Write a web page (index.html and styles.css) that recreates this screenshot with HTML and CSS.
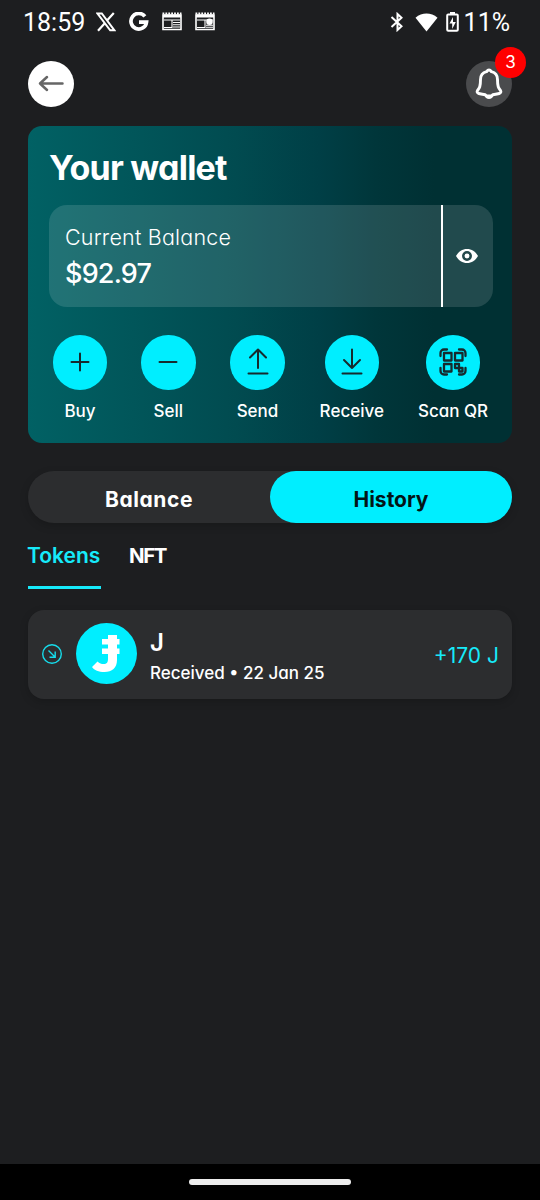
FILE: index.html
```html
<!DOCTYPE html>
<html lang="en">
<head>
<meta charset="utf-8">
<title>Your wallet</title>
<link rel="stylesheet" href="styles.css">
</head>
<body>
<div class="screen">
  <div class="status">
    <span class="clock">18:59</span>
    <svg class="s-x" width="20" height="20" viewBox="0 0 20 20"><path d="M1.500 1.500h4.300L18.500 18.300h-4.300z" fill="none" stroke="#fff" stroke-width="2"/><path d="M17.800 1l-7 7.800M8.800 11.200 2 18.800" fill="none" stroke="#fff" stroke-width="2.200"/></svg>
    <svg class="s-g" width="20" height="20" viewBox="0 0 20 20"><path d="M15.900 4.400A7.800 7.800 0 1 0 17.500 10.200H10" fill="none" stroke="#fff" stroke-width="3.700"/></svg>
    <svg class="s-news" width="20" height="20" viewBox="0 0 20 20"><path d="M1 3h18v14.500H1z" fill="none" stroke="#fff" stroke-width="1.600"/><path d="M.5 1.500h19" stroke="#fff" stroke-width="2" stroke-dasharray="1.800 1.100"/><path d="M1 4h18" stroke="#fff" stroke-width="3"/><path d="M2 8h16M11 10.500h7M11 12.700h7M11 15h7M10 8v7.500H2" fill="none" stroke="#fff" stroke-width="1.100"/></svg>
    <svg class="s-news2" width="20" height="20" viewBox="0 0 20 20"><path d="M1 3h18v14.500H1z" fill="none" stroke="#fff" stroke-width="1.600"/><path d="M.5 1.500h19" stroke="#fff" stroke-width="2" stroke-dasharray="1.800 1.100"/><path d="M1 4h18" stroke="#fff" stroke-width="3"/><path d="M2 8h16M11 13.300h7M11 15.300h7M10 8v7.500H2" fill="none" stroke="#fff" stroke-width="1.100"/><circle cx="14.500" cy="9.700" r="3.300" fill="#fff"/></svg>
    <span class="grow"></span>
    <svg class="s-bt" width="14" height="20" viewBox="0 0 14 20"><path d="M1.500 5l10 9.300L7.500 18V2l4 3.700-10 9.300" fill="none" stroke="#fff" stroke-width="2"/></svg>
    <svg class="s-wifi" width="23" height="19" viewBox="0 0 23 19"><path d="M.5 4.700C7-.8 16-.8 22.500 4.700L11.500 18.500z" fill="#fff"/></svg>
    <svg class="s-bat" width="13" height="20" viewBox="0 0 13 20"><path d="M4 0h5v2H4z" fill="#fff"/><rect x="1.200" y="2.500" width="10.600" height="16.300" rx="1" fill="none" stroke="#fff" stroke-width="2"/><path d="M7 5 3.500 11.500h2.700V17l3.600-7H7z" fill="#fff"/></svg>
    <span class="percent">11%</span>
  </div>

  <header class="top">
    <button class="round back" aria-label="Back"><svg width="26" height="18" viewBox="0 0 26 18"><path d="M24.500 8.500H2M9 2 2 8.500 9 15" fill="none" stroke="#666" stroke-width="2.500" stroke-linecap="round" stroke-linejoin="round"/></svg></button>
    <button class="round bell" aria-label="Notifications"><svg width="28" height="32" viewBox="0 0 28 32"><path d="M14 2c-1.500 0-2 1-2.400 1.600C8 4.500 5.500 7.600 5.500 11.500c0 7-1 8.500-3 11-.8 1.200-.3 2.700 1.200 3 2.800.6 5 1 6.500 1.200C11 28.300 12.300 29.500 14 29.500s3-1.200 3.800-2.800c1.500-.2 3.700-.6 6.500-1.200 1.500-.3 2-1.800 1.200-3-2-2.500-3-4-3-11 0-3.900-2.500-7-6.100-7.900C16 3 15.500 2 14 2z" fill="none" stroke="#fff" stroke-width="2.900" stroke-linejoin="round"/><path d="M10 26.500h8l-2 3h-4z" fill="#fff"/></svg><span class="badge">3</span></button>
  </header>

  <section class="wallet">
    <h1>Your wallet</h1>
    <div class="balance">
      <div class="amounts"><div class="cur">Current Balance</div><div class="value">$92.97</div></div>
      <div class="eye"><svg width="22" height="14" viewBox="0 0 22 14"><path d="M0 7C2.500 2.500 6.500 0 11 0s8.500 2.500 11 7c-2.500 4.500-6.500 7-11 7S2.500 11.500 0 7z" fill="#fff"/><circle cx="11" cy="7" r="3.700" fill="none" stroke="#24484b" stroke-width="2.500"/></svg></div>
    </div>
    <div class="actions">
      <div class="action"><i><svg width="28" height="32" viewBox="0 0 28 32"><path d="M5.500 16h17M14 7.500v17"/></svg></i><span>Buy</span></div>
      <div class="action"><i><svg width="28" height="32" viewBox="0 0 28 32"><path d="M5.500 16h17"/></svg></i><span>Sell</span></div>
      <div class="action"><i><svg width="28" height="32" viewBox="0 0 28 32"><path d="M14 22V3.500M6 11.500l8-8 8 8M4.500 27.500h19"/></svg></i><span>Send</span></div>
      <div class="action receive"><i><svg width="28" height="32" viewBox="0 0 28 32"><path d="M14 3.500V22M6 14l8 8 8-8M4.500 27.500h19"/></svg></i><span>Receive</span></div>
      <div class="action scan"><i><svg width="28" height="28" viewBox="0 0 28 28"><path d="M1.500 8V5a3.500 3.500 0 0 1 3.500-3.500h3M20 1.500h3A3.500 3.500 0 0 1 26.500 5v3M26.500 20v3a3.500 3.500 0 0 1-3.500 3.500h-3M8 26.500H5A3.500 3.500 0 0 1 1.500 23v-3M5 5h7.500v7.500H5zM16 5h7.500v7.500H16zM5 16h7.500v7.500H5zM16 16h4v4h-4zM20 20h3.500v3.500H20z"/></svg></i><span>Scan QR</span></div>
    </div>
  </section>

  <div class="switch"><div>Balance</div><div class="on">History</div></div>

  <nav class="tabs"><div class="on">Tokens</div><div class="nft">NFT</div></nav>

  <article class="entry">
    <svg class="dir" width="20" height="20" viewBox="0 0 20 20"><circle cx="10" cy="10" r="9.300"/><path d="M6.500 6.500l6.500 6.500M13.200 7.500v5.700H7.500"/></svg>
    <svg class="coin" width="61" height="61" viewBox="0 0 61 61"><circle cx="30.500" cy="30.500" r="30.500" fill="#00eeff"/><path d="M32 12h9v4h2.500v5.500H41v4h2.500V31H41v6c0 8-5 12-12.500 12-6 0-10-1.500-12.500-5l5.500-5.500c2 2 4 2.500 6 2.500 3.500 0 4.500-2 4.500-5v-5h-6v-5.500h6v-4h-6V16h6z" fill="#fff"/></svg>
    <div class="info"><div class="name">J</div><div class="meta">Received • 22 Jan 25</div></div>
    <div class="delta">+170 J</div>
  </article>

  <div class="grow"></div>
  <div class="homebar"><span></span></div>
</div>
</body>
</html>
```
FILE: styles.css
```css
* { box-sizing: border-box; }
body { margin: 0; background: #1d1e20; color: #fff; font-family: Inter, "Open Sans", sans-serif; font-feature-settings: "cv11"; }
.screen { width: 540px; height: 1200px; display: flex; flex-direction: column; overflow: hidden; }
.grow { flex: 1; }
svg { display: block; flex: none; }
span { white-space: nowrap; }
.status { height: 44px; padding: 0 30px 0 23px; display: flex; align-items: center; font-family: Roboto, sans-serif; font-size: 25px; font-weight: 450; }
.clock { width: 63px; margin-right: 10px; }
.s-g { margin-left: 13px; }
.s-news { margin-left: 13px; }
.s-news2 { margin-left: 13px; }
.s-wifi { margin-left: 11px; }
.s-bat { margin: 0 5px 0 8px; }
.top { height: 63px; padding: 17px 28px 0; display: flex; justify-content: space-between; flex: none; }
.round { width: 46px; height: 46px; border: 0; padding: 0; border-radius: 50%; display: flex; align-items: center; justify-content: center; position: relative; color: #fff; }
.back { background: #fff; }
.bell { background: #4a4b4d; }
.badge { position: absolute; left: 29px; top: -14px; width: 31px; height: 31px; border-radius: 50%; background: #f00; font: 400 17px/31px Inter, sans-serif; text-align: center; }
.wallet { flex: none; margin: 19px 28px 0; height: 317px; border-radius: 14px; padding: 21px 19px 0 21px; background: linear-gradient(90deg, #016164 0%, #014b50 43%, #003f46 60%, #00363a 72%, #003033 84%, #003033); }
h1 { margin: 0; height: 58px; font-size: 34px; line-height: 41px; font-weight: 650; letter-spacing: -.75px; }
.balance { height: 102px; border-radius: 18px; overflow: hidden; display: flex; background: rgba(255,255,255,.13); }
.amounts { width: 392px; padding: 19px 0 0 16px; }
.cur { font-size: 21.500px; line-height: 26px; font-weight: 300; letter-spacing: .2px; }
.value { font-size: 27px; line-height: 34px; font-weight: 500; margin-top: 7px; letter-spacing: -.8px; }
.eye { flex: 1; border-left: 2px solid #fff; display: flex; align-items: center; justify-content: center; padding-right: 2px; }
.actions { padding: 28px 5px 0 4px; display: flex; justify-content: space-between; }
.action { width: 54px; display: flex; flex-direction: column; align-items: center; font-size: 17px; line-height: 22px; font-weight: 500; }
.action:nth-child(2), .action:nth-child(3) { width: 56px; }
.action.receive { width: 66px; }
.action.scan { width: 70px; }
.action i { width: 54.500px; height: 54.500px; border-radius: 50%; background: #00eeff; display: flex; align-items: center; justify-content: center; margin-bottom: 10.500px; }
.action path { fill: none; stroke: #162b2e; stroke-width: 2; stroke-linecap: round; stroke-linejoin: round; }
.action.scan path { stroke-width: 2.300; }
.switch { flex: none; margin: 28px 28px 0; height: 52px; border-radius: 26px; background: #2c2d2f; display: flex; font-size: 21px; line-height: 57px; font-weight: 650; text-align: center; letter-spacing: .6px; box-shadow: 0 3px 8px rgba(0,0,0,.18); }
.switch > div { flex: 1; border-radius: 26px; }
.switch .on { background: #00eeff; color: #031517; letter-spacing: 0; }
.tabs { flex: none; margin: 19px 28px 0; display: flex; gap: 28px; font-size: 21px; line-height: 27px; font-weight: 600; }
.tabs > div { height: 47px; }
.tabs .on { width: 73px; color: #16eafa; border-bottom: 3px solid #16eafa; text-indent: -1px; }
.tabs .nft { font-size: 20.500px; letter-spacing: -1.500px; font-weight: 650; }
.entry { flex: none; margin: 21px 28px 0; height: 89px; border-radius: 16px; background: #2c2d2f; display: flex; align-items: center; padding: 0 14px; box-shadow: 0 3px 8px rgba(0,0,0,.18); }
.dir { margin: 0 14px 2px 0; fill: none; stroke: #16dceb; stroke-width: 1.400; }
.coin { margin-bottom: 2px; }
.info { margin-left: 13px; padding-top: 3px; flex: 1; }
.name { font-size: 24px; line-height: 30px; font-weight: 600; }
.meta { font-size: 17px; line-height: 24px; font-weight: 500; margin-top: 3px; }
.delta { font-size: 21px; line-height: 28px; padding-top: 2px; margin-right: -1px; color: #16eafa; }
.homebar { height: 36px; background: #000; padding-top: 15px; flex: none; }
.homebar span { display: block; width: 162px; height: 6px; border-radius: 3px; background: #ececec; margin: 0 auto; }
```
